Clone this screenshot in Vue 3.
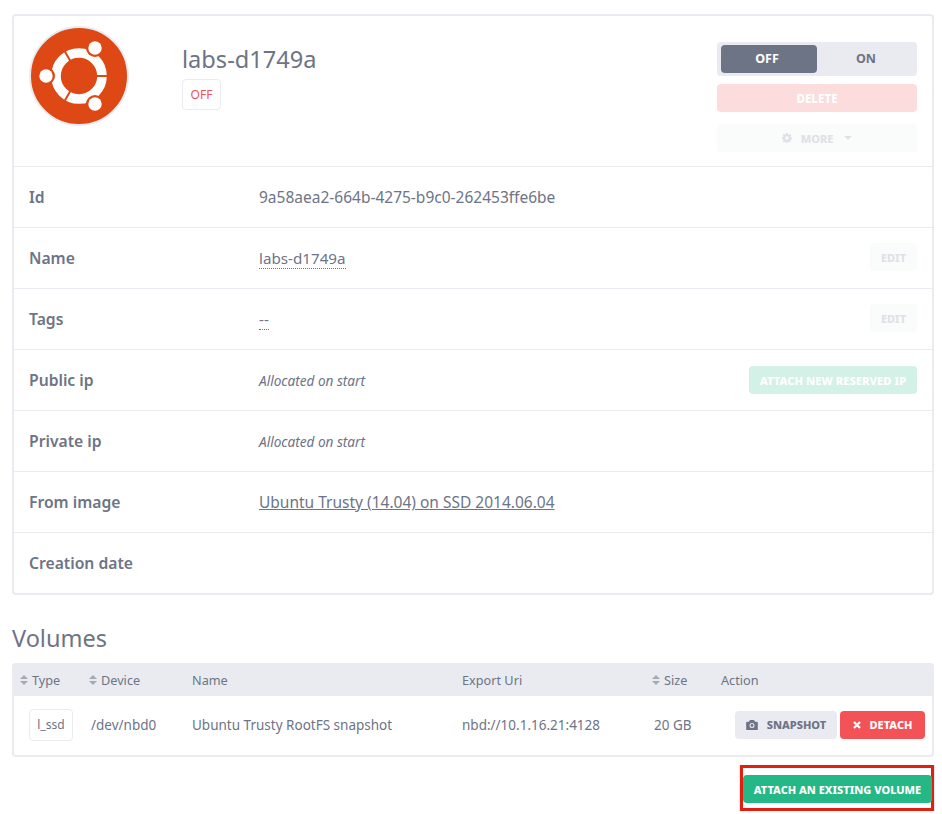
<template>
  <div class="page">
    <section class="card">
      <header class="head">
        <div class="logo">
          <svg viewBox="0 0 100 100" width="100" height="100">
            <circle cx="50" cy="50" r="49" fill="#dd4814" stroke="#e9ebf0" stroke-width="2" />
            <circle cx="50" cy="50" r="23" fill="none" stroke="#fff" stroke-width="9.6" />
            <path d="M50 50H80M50 50L35 24M50 50L35 76" stroke="#dd4814" stroke-width="2" />
            <g v-for="d in dots" :key="d[1]">
              <circle :cx="d[0]" :cy="d[1]" r="9" fill="#dd4814" />
              <circle :cx="d[0]" :cy="d[1]" r="6.7" fill="#fff" />
            </g>
          </svg>
        </div>
        <div class="title">
          <h1>labs-d1749a</h1>
          <span class="state">OFF</span>
        </div>
        <div class="controls">
          <div class="toggle">
            <span class="opt active">OFF</span>
            <span class="opt">ON</span>
          </div>
          <button class="btn wide delete">DELETE</button>
          <button class="btn wide more">
            <svg viewBox="0 0 16 16" width="10" height="10"><path fill="currentColor" fill-rule="evenodd" d="M6.6 0h2.8l.4 2.3 1.2.5 1.9-1.3 2 2-1.4 1.9.5 1.2 2 .4v2.8l-2.2.4-.5 1.2 1.3 1.9-2 2-1.9-1.3-1.2.5-.4 2H6.6l-.4-2.2-1.2-.5L3.1 15.1l-2-2 1.3-1.9-.5-1.2L0 9.4V6.6l2-.4.5-1.2-1.4-1.9 2-2L5 2.4l1.2-.5zM8 5.3a2.7 2.7 0 1 0 0 5.4 2.7 2.7 0 0 0 0-5.400z" /></svg>
            <span>MORE</span>
            <svg class="caret" viewBox="0 0 8 4" width="8" height="4"><path fill="currentColor" d="M0 0h8L4 4z" /></svg>
          </button>
        </div>
      </header>

      <div v-for="row in rows" :key="row.label" class="row">
        <div class="label">{{ row.label }}</div>
        <div class="value">
          <a v-if="row.kind" :class="row.kind">{{ row.value }}</a>
          <em v-else-if="row.note">{{ row.note }}</em>
          <template v-else>{{ row.value }}</template>
        </div>
        <button v-if="row.action" class="btn" :class="row.action === 'EDIT' ? 'edit' : 'reserve'">{{ row.action }}</button>
      </div>
    </section>

    <h2 class="volumes">Volumes</h2>
    <div class="table">
      <div class="grid thead">
        <div v-for="col in cols" :key="col.name" class="th">
          <svg v-if="col.sort" viewBox="0 0 8 10" width="8" height="10"><path fill="#a3a9b5" d="M4 0l4 4H0zM0 6h8l-4 4z" /></svg>
          {{ col.name }}
        </div>
      </div>
      <div class="grid tbody">
        <div class="td"><span class="tag">l_ssd</span></div>
        <div class="td dev">/dev/nbd0</div>
        <div class="td">Ubuntu Trusty RootFS snapshot</div>
        <div class="td">nbd://10.1.16.21:4128</div>
        <div class="td dev">20 GB</div>
        <div class="td actions">
          <button class="btn snapshot">
            <svg viewBox="0 0 14 12" width="12" height="10"><path fill="currentColor" fill-rule="evenodd" d="M4.5 0h5l1 2H13a1 1 0 0 1 1 1v8a1 1 0 0 1-1 1H1a1 1 0 0 1-1-1V3a1 1 0 0 1 1-1h2.5zM7 3.6a3 3 0 1 0 0 6 3 3 0 0 0 0-6zm0 1.3a1.7 1.7 0 1 1 0 3.4 1.7 1.7 0 0 1 0-3.400z" /></svg>
            SNAPSHOT
          </button>
          <button class="btn detach">
            <svg viewBox="0 0 8 8" width="8" height="8"><path stroke="currentColor" stroke-width="2.2" d="M1 1l6 6M7 1L1 7" /></svg>
            DETACH
          </button>
        </div>
      </div>
    </div>

    <div class="foot">
      <div class="mark">
        <button class="btn attach">ATTACH AN EXISTING VOLUME</button>
      </div>
    </div>
  </div>
</template>

<script setup>
const dots = [[17, 50], [66, 22], [66, 78]]

const rows = [
  { label: 'Id', value: '9a58aea2-664b-4275-b9c0-262453ffe6be' },
  { label: 'Name', value: 'labs-d1749a', kind: 'dotted', action: 'EDIT' },
  { label: 'Tags', value: '--', kind: 'dotted', action: 'EDIT' },
  { label: 'Public ip', note: 'Allocated on start', action: 'ATTACH NEW RESERVED IP' },
  { label: 'Private ip', note: 'Allocated on start' },
  { label: 'From image', value: 'Ubuntu Trusty (14.04) on SSD 2014.06.04', kind: 'under' },
  { label: 'Creation date', value: '' }
]

const cols = [
  { name: 'Type', sort: true },
  { name: 'Device', sort: true },
  { name: 'Name' },
  { name: 'Export Uri' },
  { name: 'Size', sort: true },
  { name: 'Action' }
]
</script>

<style>
body { margin: 0; background: #fff; }
</style>

<style scoped>
.page {
  padding: 14px 8px 0 12px;
  font-family: "Noto Sans", "Open Sans", sans-serif;
  font-size: 14px;
  color: #6d7486;
}
.card { border: 2px solid #e9ebf0; border-radius: 4px; }
.head {
  display: flex;
  height: 151px;
  box-sizing: border-box;
  padding: 10px 15px 0 15px;
  border-bottom: 1px solid #e9ebf0;
}
.logo { width: 153px; height: 100px; }
.title h1 { margin: 16px 0 0; font-size: 23.6px; line-height: 34px; font-weight: 400; }
.state {
  display: inline-block;
  margin-top: 3px;
  width: 39px;
  height: 31px;
  box-sizing: border-box;
  line-height: 29px;
  text-align: center;
  border: 1px solid #e9ebf0;
  border-radius: 4px;
  color: #f35257;
  font-size: 12px;
}
.controls { margin-left: auto; margin-top: 16px; width: 200px; display: flex; flex-direction: column; }
.toggle {
  display: flex;
  height: 34px;
  box-sizing: border-box;
  padding: 3px 4px;
  background: #e9ebf0;
  border-radius: 4px;
  margin-bottom: 8px;
}
.opt {
  flex: 1;
  box-sizing: border-box;
  text-align: center;
  line-height: 28px;
  font-size: 12.5px;
  font-weight: 700;
}
.opt.active { flex: 0 0 96px; padding-right: 4px; background: #6d7486; color: #fff; border-radius: 4px; }
.opt:last-child { padding-left: 2px; }
.btn {
  height: 28px;
  padding: 0 10px;
  border: 0;
  border-radius: 4px;
  font-family: inherit;
  font-size: 11px;
  font-weight: 800;
  display: inline-flex;
  align-items: center;
  justify-content: center;
  white-space: nowrap;
}
.wide { width: 200px; }
.delete { background: #fddcdd; color: #fff; margin-bottom: 12px; font-size: 11.6px; }
.more { background: #fafbfb; color: #dfe1e6; gap: 9px; padding-right: 10px; }
.caret { margin-left: 2px; }
.row {
  display: flex;
  align-items: center;
  height: 61px;
  box-sizing: border-box;
  padding: 0 15px;
  border-bottom: 1px solid #e9ebf0;
}
.row:last-child { height: 60px; border-bottom: 0; }
.label { width: 230px; font-size: 15.7px; font-weight: 600; }
.value { flex: 1; font-size: 15.5px; }
.value em { font-size: 13.6px; }
.dotted { font-size: 15.2px; border-bottom: 1px dotted #6d7486; }
.under { text-decoration: underline; }
.edit { width: 47px; padding: 0; margin-top: -2px; background: #fafbfb; color: #dfe1e6; }
.reserve { width: 168px; padding: 0; background: #d3f1e7; color: #fff; font-size: 11.25px; }
.volumes { margin: 25px 0 7px; font-size: 23.5px; line-height: 36px; font-weight: 400; }
.table { border: 2px solid #e9ebf0; border-top: 0; border-radius: 4px; }
.grid { display: grid; grid-template-columns: 75px 103px 270px 190px 69px 1fr; align-items: center; }
.thead { height: 33px; margin: 0 -2px; padding: 0 2px; background: #e9ebf0; border-radius: 4px 4px 0 0; }
.tbody { height: 59px; }
.th { font-size: 12.7px; display: flex; align-items: center; gap: 4px; }
.th:first-child { padding-left: 6px; }
.td { font-size: 13.5px; padding-bottom: 1px; }
.dev { padding-left: 2px; }
.tag {
  display: inline-block;
  margin-left: 15px;
  width: 44px;
  height: 32px;
  line-height: 30px;
  box-sizing: border-box;
  text-align: center;
  border: 1px solid #e9ebf0;
  border-radius: 4px;
  font-size: 12px;
}
.actions { display: flex; justify-content: flex-end; gap: 3px; padding-right: 7px; margin: -1px 0 0 -60px; }
.snapshot { width: 102px; padding: 0; gap: 9px; background: #e9ebf0; color: #6d7486; }
.detach { width: 85px; padding: 0; gap: 9px; background: #f35257; color: #fff; }
.foot { display: flex; justify-content: flex-end; margin-top: 8px; }
.mark {
  padding: 7px 0 5px 0;
  width: 194px;
  box-sizing: border-box;
  border: 3px solid #e0200f;
  box-shadow: 0 1px 2px rgba(0, 0, 0, .3);
}
.attach { width: 189px; height: 28px; padding: 0; background: #26b787; color: #fff; display: flex; font-size: 11px; }
</style>
